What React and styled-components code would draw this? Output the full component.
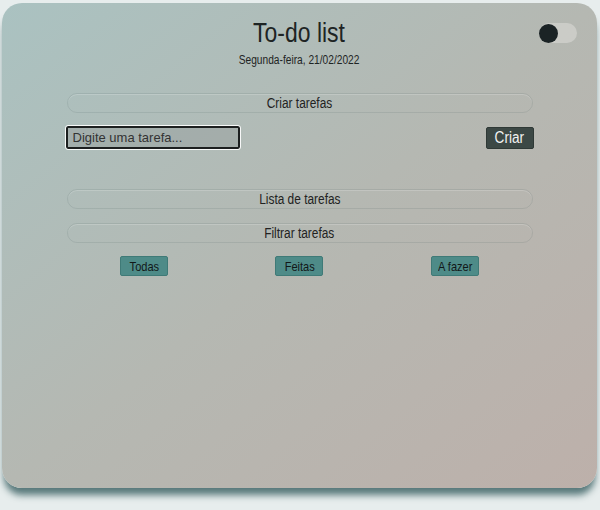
import { useState } from "react";
import styled, { createGlobalStyle } from "styled-components";

const GlobalStyle = createGlobalStyle`
  html, body {
    margin: 0;
    padding: 0;
    background: #e7eded;
    font-family: "Liberation Sans", Arial, sans-serif;
  }
`;

const Page = styled.div`
  padding: 3px 3px 22px 2px;
`;

const Card = styled.div`
  position: relative;
  height: 485px;
  border-radius: 20px;
  background: linear-gradient(to bottom right, #aac2c1 0%, #b5b8b2 50%, #bdb0aa 100%);
  box-shadow: 0 9px 7px -2px rgba(72, 108, 110, 0.9);
  display: flex;
  flex-direction: column;
  align-items: center;
  color: #1e2424;
`;

// the reference type is a narrow grotesque, so labels are squeezed a little
const Label = styled.span`
  display: inline-block;
  transform: scaleX(0.85);
  white-space: nowrap;
`;

const Title = styled.h1`
  margin: 15px 0 0;
  font-size: 27px;
  font-weight: 400;
  line-height: 31px;
`;

const DateText = styled.p`
  margin: 4px 0 0;
  font-size: 12px;
  line-height: 14px;
`;

const Toggle = styled.div`
  position: absolute;
  top: 20px;
  right: 20px;
  width: 38px;
  height: 20px;
  border-radius: 10px;
  background: rgba(220, 220, 216, 0.55);
`;

const Knob = styled.span`
  position: absolute;
  top: 1px;
  left: ${(p) => (p.on ? "19px" : "0")};
  width: 19px;
  height: 19px;
  border-radius: 50%;
  background: #1b2325;
`;

const Content = styled.div`
  width: 466px;
  display: flex;
  flex-direction: column;
`;

const Section = styled.div`
  height: 18px;
  border: 1px solid rgba(60, 80, 80, 0.12);
  border-radius: 10px;
  box-shadow: inset 0 1px 0 rgba(255, 255, 255, 0.18);
  font-size: 14px;
  line-height: 18px;
  text-align: center;
  color: #222;
  margin-top: ${(p) => p.top}px;
`;

const InputRow = styled.div`
  display: flex;
  justify-content: space-between;
  align-items: center;
  margin-top: 13px;
`;

const TaskInput = styled.input`
  box-sizing: border-box;
  width: 174px;
  height: 23px;
  margin-left: -1px;
  padding: 0 5px;
  border: 2px solid #1c1f1f;
  border-radius: 2px;
  outline: 1px solid rgba(255, 255, 255, 0.9);
  background: rgba(155, 164, 161, 0.6);
  font-family: inherit;
  font-size: 13px;
  color: #222;
  &::placeholder {
    color: #333;
  }
`;

const CreateButton = styled.button`
  width: 48px;
  height: 22px;
  padding: 0;
  margin-right: -1px;
  border: 1px solid #2f3936;
  border-radius: 2px;
  background: #3c4845;
  color: #f2f2f2;
  font-family: inherit;
  font-size: 16px;
  cursor: pointer;
`;

const FilterRow = styled.div`
  display: flex;
  justify-content: space-around;
  margin-top: 13px;
`;

const FilterButton = styled.button`
  width: 48px;
  height: 20px;
  padding: 0;
  border: 1px solid #3f7a77;
  border-radius: 2px;
  background: #4e8b88;
  color: #121818;
  font-family: inherit;
  font-size: 13px;
  cursor: pointer;
`;

export default function App() {
  const [dark, setDark] = useState(false);
  const [task, setTask] = useState("");

  return (
    <>
      <GlobalStyle />
      <Page>
        <Card>
          <Toggle onClick={() => setDark(!dark)}>
            <Knob on={dark ? 1 : 0} />
          </Toggle>
          <Title>
            <Label>To-do list</Label>
          </Title>
          <DateText>
            <Label>Segunda-feira, 21/02/2022</Label>
          </DateText>
          <Content>
            <Section top={26}>
              <Label>Criar tarefas</Label>
            </Section>
            <InputRow>
              <TaskInput
                placeholder="Digite uma tarefa..."
                value={task}
                onChange={(e) => setTask(e.target.value)}
              />
              <CreateButton>
                <Label>Criar</Label>
              </CreateButton>
            </InputRow>
            <Section top={40}>
              <Label>Lista de tarefas</Label>
            </Section>
            <Section top={14}>
              <Label>Filtrar tarefas</Label>
            </Section>
            <FilterRow>
              <FilterButton>
                <Label>Todas</Label>
              </FilterButton>
              <FilterButton>
                <Label>Feitas</Label>
              </FilterButton>
              <FilterButton>
                <Label>A fazer</Label>
              </FilterButton>
            </FilterRow>
          </Content>
        </Card>
      </Page>
    </>
  );
}
